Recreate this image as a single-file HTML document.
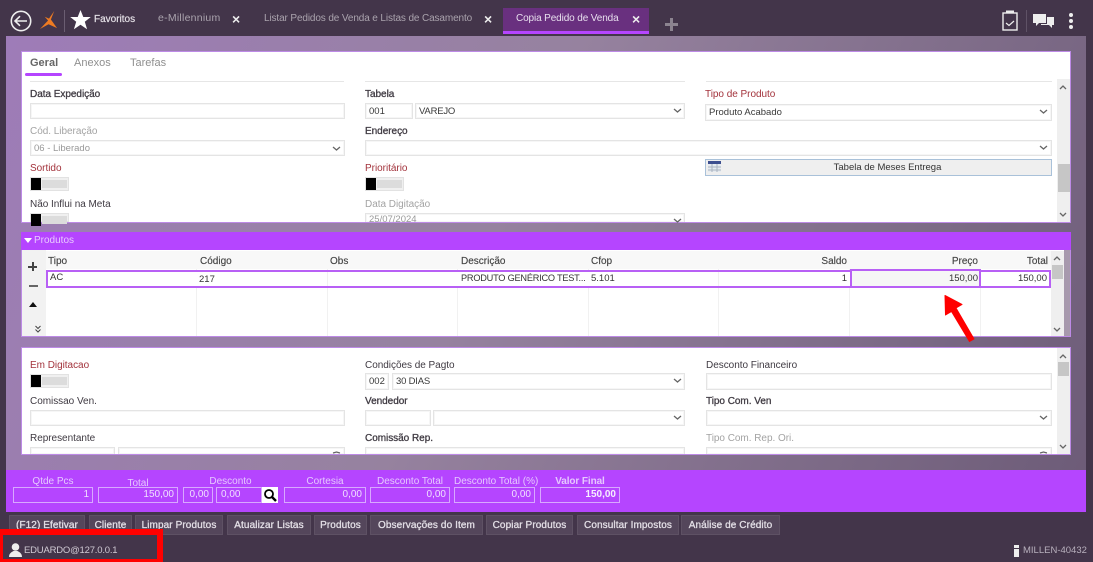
<!DOCTYPE html>
<html lang="pt"><head><meta charset="utf-8"><title>Copia Pedido de Venda</title>
<style>
html,body{margin:0;padding:0}
body{width:1093px;height:562px;overflow:hidden;background:#43354a;font-family:"Liberation Sans",sans-serif;font-size:10px;color:#3a3a3a;position:relative}
div,span{position:absolute;box-sizing:border-box;white-space:nowrap}
svg{position:absolute;overflow:visible}
.bg{left:6px;top:36px;width:1080px;height:434px;background:linear-gradient(115deg,#9e7cb8 0%,#96829f 45%,#6d5c78 100%)}
.panel{background:#fff;border:1px solid #bd8ae6;overflow:hidden}
.l{font-size:10px;line-height:12px;letter-spacing:-.03px;color:#3f3a42;margin-top:2px}
.s{-webkit-text-stroke:.3px #3f3a42}
.r{color:#a3333c}.g{color:#a3a3a3}
.f{height:16px;border:1px solid #e4e4e4;box-shadow:inset 0 0 0 1px #f6f6f6;background:#fff;font-size:9.5px;line-height:16px;padding-left:3px}
.tg{width:39px;height:14px;border:1px solid #e2e2e2;background:#f0f0f0}
.tg:before{content:"";position:absolute;left:0;top:0;width:10px;height:12px;background:#000}
.tg:after{content:"";position:absolute;left:11px;top:2px;width:25px;height:8px;background:#dcdcdc}
.top{color:#aaa3ad;font-size:10px;letter-spacing:-.12px;line-height:12px}
.x{color:#eee;font-size:14px;font-weight:bold;line-height:12px}
.h{font-size:10px;line-height:12px;color:#444;margin-top:2px;-webkit-text-stroke:.15px #444}
.c{font-size:9.5px;line-height:12px;color:#333;margin-top:1px}
.v{width:1px;background:#f1f1f1}
.sb{background:#efefef}
.th{background:#c6c6c6}
.lb{color:#e6c8ff;font-size:10px;line-height:12px;text-align:center;margin-top:2px}
.in{top:487px;height:16px;border:1px solid #d8a8ff;color:#f0e0ff;font-size:10px;line-height:14px;text-align:right;padding-right:3px}
.b{top:515px;height:20px;background:#54465b;border:1px solid #5e5164;color:#e3dfe6;font-size:10px;-webkit-text-stroke:.3px #e3dfe6;line-height:19px;text-align:center;letter-spacing:.1px}
.frag{top:81px;height:1px;background:#e6e6e6}
</style></head><body>

<!-- top bar -->
<svg style="left:10px;top:11px" width="22" height="22" viewBox="0 0 22 22" fill="none" stroke="#eee" stroke-width="1.6"><circle cx="11" cy="10" r="9.700"/><path d="M17 10H5M10 5.200L5 10l5 4.800"/></svg>
<svg style="left:40px;top:11px" width="18" height="19" viewBox="0 0 19 20"><path d="M15 0L9.500 8 5 6l3.500 4L0 19l9-5 9 4-5-7-1.500-2z" fill="#ee7b22"/></svg>
<div style="left:64px;top:10px;width:1px;height:22px;background:#6b5e72"></div>
<svg style="left:70px;top:10px" width="21" height="20" viewBox="0 0 21 20"><path d="M10.500 0l2.800 7h7.500l-6 4.700 2.300 7.600-6.600-4.500-6.600 4.500 2.300-7.600-6-4.700h7.500z" fill="#fff"/></svg>
<div style="left:94px;top:14px;color:#e4e0e6;font-size:10px;line-height:12px;-webkit-text-stroke:.2px #e4e0e6">Favoritos</div>
<div class="top" style="left:158px;top:12px;font-size:10.5px;letter-spacing:.25px">e-Millennium</div>
<div class="x" style="left:232px;top:13px">×</div>
<div class="top" style="left:264px;top:13px">Listar Pedidos de Venda e Listas de Casamento</div>
<div class="x" style="left:484px;top:13px">×</div>
<div style="left:503px;top:8px;width:146px;height:26px;background:#69307f;border-bottom:3px solid #b545ff"></div>
<div class="top" style="left:516px;top:13px;color:#e8dfee">Copia Pedido de Venda</div>
<div class="x" style="left:632px;top:13px">×</div>
<div style="left:665px;top:23px;width:13px;height:3px;background:#8c8490"></div>
<div style="left:670px;top:18px;width:3px;height:13px;background:#8c8490"></div>
<svg style="left:1002px;top:10px" width="16" height="21" viewBox="0 0 16 21" fill="none" stroke="#eee" stroke-width="1.400"><rect x="1" y="3" width="14" height="17"/><path d="M5 3V1.500h6V3" stroke-width="2"/><path d="M4 13l3 2.500 5-4.500" stroke-width="1.200"/></svg>
<div style="left:1026px;top:10px;width:1px;height:22px;background:#5f5266"></div>
<svg style="left:1033px;top:14px" width="22" height="15" viewBox="0 0 22 15" fill="#eee"><path d="M0 0h13v9H6l-3 3V9H0z"/><path d="M14 3h7v8h-2v3l-3-3H8v-1h6z"/></svg>
<div style="left:1069px;top:13px;width:4px;height:4px;border-radius:2px;background:#eee"></div>
<div style="left:1069px;top:19px;width:4px;height:4px;border-radius:2px;background:#eee"></div>
<div style="left:1069px;top:25px;width:4px;height:4px;border-radius:2px;background:#eee"></div>

<div class="bg"></div>

<!-- panel 1 -->
<div class="panel" style="left:21px;top:51px;width:1050px;height:172px"></div>
<div style="left:30px;top:56px;margin-top:1px;font-size:11px;font-weight:bold;color:#666;line-height:13px">Geral</div>
<div style="left:74px;top:56px;margin-top:1px;font-size:11px;color:#8f8f8f;line-height:13px">Anexos</div>
<div style="left:130px;top:56px;margin-top:1px;font-size:11px;color:#8f8f8f;line-height:13px">Tarefas</div>
<div style="left:25px;top:73px;width:37px;height:3px;background:#b545ff;border-radius:2px"></div>
<div class="frag" style="left:30px;width:314px"></div>
<div class="frag" style="left:365px;width:320px"></div>
<div class="frag" style="left:706px;width:346px"></div>

<div class="l s" style="left:30px;top:87px">Data Expedição</div>
<div class="f" style="left:30px;top:103px;width:315px"></div>
<div class="l g" style="left:30px;top:124px">Cód. Liberação</div>
<div class="f g" style="left:30px;top:140px;width:315px;color:#999">06 - Liberado</div>
<div class="l r" style="left:30px;top:161px">Sortido</div>
<div class="tg" style="left:30px;top:177px"></div>
<div class="l" style="left:30px;top:197px">Não Influi na Meta</div>
<div class="tg" style="left:30px;top:213px;height:9px"></div>

<div class="l s" style="left:365px;top:87px">Tabela</div>
<div class="f" style="left:365px;top:103px;width:48px">001</div>
<div class="f" style="left:415px;top:103px;width:270px;letter-spacing:-.2px">VAREJO</div>
<div class="l s" style="left:365px;top:124px">Endereço</div>
<div class="f" style="left:365px;top:140px;width:687px"></div>
<div class="l r" style="left:365px;top:161px">Prioritário</div>
<div class="tg" style="left:365px;top:177px"></div>
<div class="l g" style="left:365px;top:197px">Data Digitação</div>
<div class="f g" style="left:365px;top:213px;width:320px;height:9px;line-height:11px;overflow:hidden;border-bottom:0;color:#999">25/07/2024</div>

<div class="l r" style="left:705px;top:87px">Tipo de Produto</div>
<div class="f" style="left:705px;top:104px;width:347px;height:17px">Produto Acabado</div>
<div style="left:705px;top:159px;width:347px;height:17px;background:#efefef;border:1px solid #a9c1d9;font-size:9.500px;line-height:16px;text-align:center;color:#333;padding-left:18px">Tabela de Meses Entrega</div>
<svg style="left:708px;top:161px" width="13" height="11" viewBox="0 0 13 11"><rect width="13" height="11" fill="#e6ebf0"/><rect width="13" height="3" fill="#3d4f8f"/><path d="M0 6h13M0 9h13M4 3v8M9 3v8" stroke="#aab3c0"/></svg>

<div class="sb" style="left:1057px;top:79px;width:13px;height:143px"></div>
<div class="th" style="left:1058px;top:164px;width:12px;height:28px"></div>

<!-- produtos -->
<div style="left:21px;top:232px;width:1050px;height:18px;background:#b545ff"></div>
<svg style="left:24px;top:238px" width="8" height="5"><path d="M0 0h8L4 5z" fill="#fff"/></svg>
<div style="left:34px;top:235px;color:#e8c9ff;font-size:10px;line-height:12px">Produtos</div>
<div class="panel" style="left:21px;top:250px;width:1050px;height:87px;border-top:0"></div>
<div style="left:22px;top:250px;width:24px;height:86px;background:#f2f2f2"></div>
<div style="left:46px;top:251px;width:1005px;height:18px;background:#f8f8f8"></div>
<div class="v" style="left:196px;top:269px;height:67px"></div>
<div class="v" style="left:327px;top:269px;height:67px"></div>
<div class="v" style="left:457px;top:269px;height:67px"></div>
<div class="v" style="left:588px;top:269px;height:67px"></div>
<div class="v" style="left:718px;top:269px;height:67px"></div>
<div class="v" style="left:849px;top:269px;height:67px"></div>
<div class="v" style="left:980px;top:269px;height:67px"></div>
<div class="h" style="left:48px;top:254px">Tipo</div>
<div class="h" style="left:200px;top:254px">Código</div>
<div class="h" style="left:330px;top:254px">Obs</div>
<div class="h" style="left:461px;top:254px">Descrição</div>
<div class="h" style="left:591px;top:254px">Cfop</div>
<div class="h" style="right:246px;top:254px">Saldo</div>
<div class="h" style="right:115px;top:254px">Preço</div>
<div class="h" style="right:45px;top:254px">Total</div>
<div style="left:46px;top:270px;width:1005px;height:18px;border:2px solid #b860f5;background:#fff"></div>
<div style="left:850px;top:269px;width:131px;height:19px;border:2px solid #b860f5;background:#f6f6f6"></div>
<div class="v" style="left:327px;top:272px;height:14px"></div>
<div class="v" style="left:718px;top:272px;height:14px"></div>
<div class="c" style="left:50px;top:271px">AC</div>
<div class="c" style="left:199px;top:273px">217</div>
<div class="c" style="left:461px;top:271px;font-size:9.2px;letter-spacing:-.22px">PRODUTO GENÉRICO TEST...</div>
<div class="c" style="left:591px;top:272px">5.101</div>
<div class="c" style="right:246px;top:272px">1</div>
<div class="c" style="right:115px;top:272px">150,00</div>
<div class="c" style="right:46px;top:272px">150,00</div>
<div style="left:28px;top:266px;width:9px;height:1.500px;background:#444"></div>
<div style="left:32px;top:262px;width:1.500px;height:9px;background:#444"></div>
<div style="left:29px;top:285px;width:9px;height:1.500px;background:#666"></div>
<svg style="left:29px;top:302px" width="8" height="5"><path d="M0 5h8L4 0z" fill="#111"/></svg>
<svg style="left:35px;top:325px" width="6" height="8" fill="none" stroke="#444" stroke-width="1"><path d="M.5 1L3 3.500 5.500 1M.5 4.500L3 7l2.500-2.500"/></svg>
<div class="sb" style="left:1051px;top:251px;width:13px;height:85px"></div>
<div class="th" style="left:1052px;top:265px;width:11px;height:14px"></div>
<div style="left:1064px;top:250px;width:6px;height:86px;background:#a799ad"></div>

<!-- panel 3 -->
<div class="panel" style="left:21px;top:347px;width:1050px;height:108px"></div>
<div class="l r" style="left:30px;top:358px">Em Digitacao</div>
<div class="tg" style="left:30px;top:374px"></div>
<div class="l" style="left:30px;top:394px">Comissao Ven.</div>
<div class="f" style="left:30px;top:410px;width:315px"></div>
<div class="l" style="left:30px;top:431px">Representante</div>
<div class="f" style="left:30px;top:447px;width:85px;height:7px;border-bottom:0"></div>
<div class="f" style="left:118px;top:447px;width:227px;height:7px;border-bottom:0"></div>

<div class="l" style="left:365px;top:358px">Condições de Pagto</div>
<div class="f" style="left:365px;top:373px;width:24px;height:17px">002</div>
<div class="f" style="left:392px;top:373px;width:293px;height:17px;letter-spacing:-.2px">30 DIAS</div>
<div class="l s" style="left:365px;top:394px">Vendedor</div>
<div class="f" style="left:365px;top:410px;width:66px"></div>
<div class="f" style="left:433px;top:410px;width:252px"></div>
<div class="l s" style="left:365px;top:431px">Comissão Rep.</div>
<div class="f" style="left:365px;top:447px;width:320px;height:7px;border-bottom:0"></div>

<div class="l" style="left:706px;top:358px">Desconto Financeiro</div>
<div class="f" style="left:706px;top:373px;width:346px;height:17px"></div>
<div class="l s" style="left:706px;top:394px">Tipo Com. Ven</div>
<div class="f" style="left:706px;top:410px;width:346px"></div>
<div class="l g" style="left:706px;top:431px">Tipo Com. Rep. Ori.</div>
<div class="f" style="left:706px;top:447px;width:346px;height:7px;border-bottom:0"></div>
<div class="sb" style="left:1057px;top:348px;width:13px;height:106px"></div>
<div class="th" style="left:1058px;top:362px;width:11px;height:14px"></div>

<!-- chevrons -->
<svg style="left:0;top:0" width="1093" height="562" fill="none" stroke="#666" stroke-width="1.300">
<path d="M333 147l3.500 3 3.500-3M674 109l3.500 3 3.500-3M674 219l3.500 3 3.500-3M1040 110l3.500 3 3.500-3M1040 146l3.500 3 3.500-3M674 379l3.500 3 3.500-3M674 416l3.500 3 3.500-3M1040 416l3.500 3 3.500-3M333 453l3.500-1 3.500 1M1040 453l3.500-1 3.500 1M1060 89l3-3 3 3M1060 213l3 3 3-3M1054 260l3-3 3 3M1054 328l3 3 3-3M1060 358l3-3 3 3M1060 445l3 3 3-3"/>
</svg>

<!-- arrow -->
<svg style="left:0;top:0" width="1093" height="562"><path d="M945 295.500l17 9-6 3.500 18 31-4.500 2.500-18-30-6 3.500z" fill="#f00" stroke="#f00" stroke-linejoin="round"/></svg>

<!-- totals -->
<div style="left:6px;top:470px;width:1080px;height:42px;background:#b545ff"></div>
<div class="lb" style="left:13px;top:474px;width:80px">Qtde Pcs</div>
<div class="lb" style="left:98px;top:476px;width:80px">Total</div>
<div class="lb" style="left:183px;top:474px;width:95px">Desconto</div>
<div class="lb" style="left:284px;top:474px;width:82px">Cortesia</div>
<div class="lb" style="left:370px;top:474px;width:80px">Desconto Total</div>
<div class="lb" style="left:454px;top:474px;width:81px">Desconto Total (%)</div>
<div class="lb" style="left:540px;top:474px;width:80px;font-weight:bold;letter-spacing:-.1px">Valor Final</div>
<div class="in" style="left:13px;width:80px">1</div>
<div class="in" style="left:98px;width:80px">150,00</div>
<div class="in" style="left:183px;width:30px">0,00</div>
<div class="in" style="left:216px;width:46px;text-align:left;padding-left:4px">0,00</div>
<div style="left:262px;top:487px;width:16px;height:16px;background:#fff"></div>
<svg style="left:263px;top:488px" width="14" height="14" fill="none" stroke="#000"><circle cx="6" cy="6" r="4" stroke-width="1.800"/><path d="M9 9l4 4" stroke-width="2.400"/></svg>
<div class="in" style="left:284px;width:82px">0,00</div>
<div class="in" style="left:370px;width:80px">0,00</div>
<div class="in" style="left:454px;width:81px">0,00</div>
<div class="in" style="left:540px;width:80px;font-weight:bold;color:#f6eeff">150,00</div>

<!-- buttons -->
<div class="b" style="left:9px;width:76px">(F12) Efetivar</div>
<div class="b" style="left:89px;width:43px">Cliente</div>
<div class="b" style="left:135px;width:88px">Limpar Produtos</div>
<div class="b" style="left:227px;width:84px">Atualizar Listas</div>
<div class="b" style="left:314px;width:53px">Produtos</div>
<div class="b" style="left:370px;width:113px">Observações do Item</div>
<div class="b" style="left:486px;width:87px">Copiar Produtos</div>
<div class="b" style="left:577px;width:102px">Consultar Impostos</div>
<div class="b" style="left:681px;width:99px">Análise de Crédito</div>

<!-- status -->
<div style="left:0;top:529px;width:163px;height:33px;background:#43354a;border:solid #f00;border-width:6px 6px 3px 3px"></div>
<svg style="left:9px;top:543px" width="14" height="14" fill="#eee"><circle cx="6.500" cy="4" r="3.800"/><path d="M0 14c0-4 3-5 4.500-6h4C10 9 13 10 13 14z"/></svg>
<div style="left:24px;top:545px;color:#cfc9d3;font-size:9.500px;line-height:12px;letter-spacing:-.2px">EDUARDO@127.0.0.1</div>
<div style="left:1014px;top:545px;width:5px;height:3px;background:#eee"></div>
<div style="left:1014px;top:549px;width:5px;height:8px;background:#eee"></div>
<div style="left:1023px;top:545px;color:#b8b0bd;font-size:9.500px;line-height:12px">MILLEN-40432</div>
</body></html>
